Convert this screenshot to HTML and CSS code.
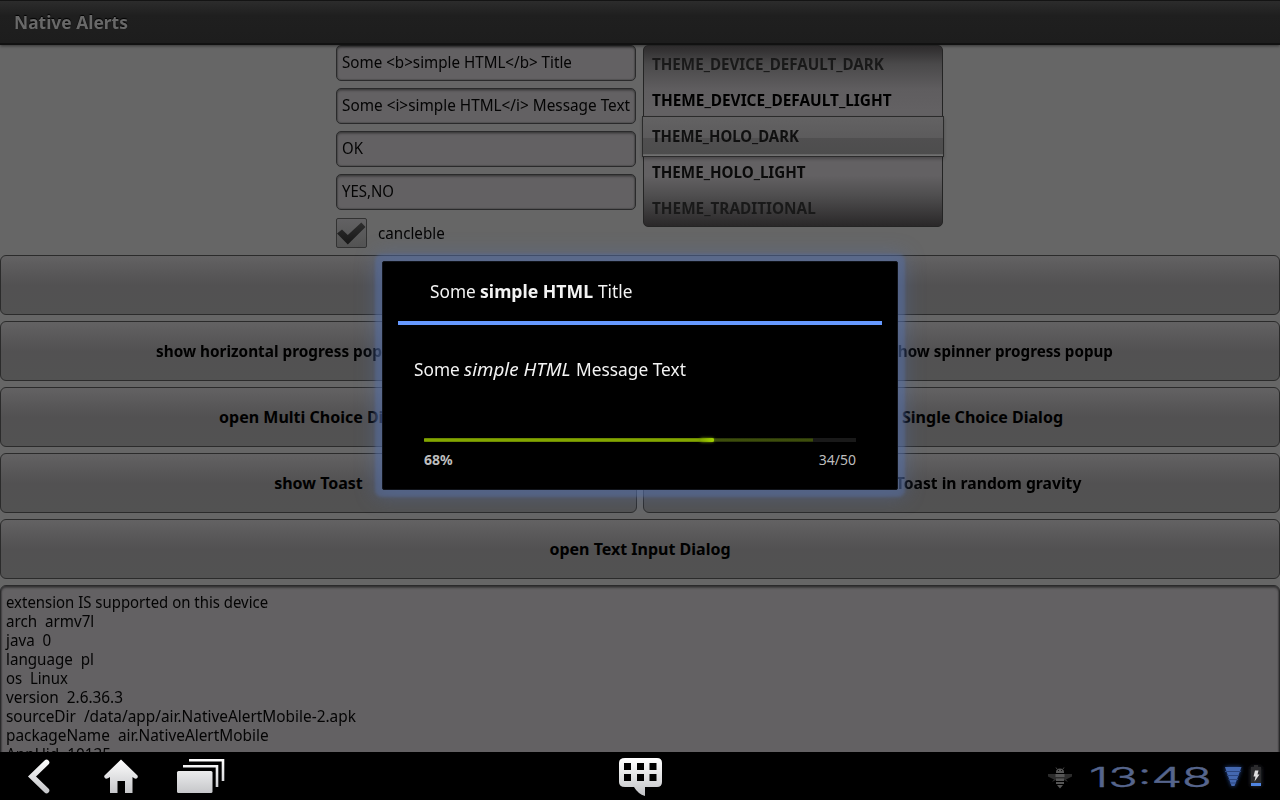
FILE: index.html
```html
<!DOCTYPE html>
<html lang="en">
<head>
<meta charset="utf-8">
<title>Native Alerts</title>
<link rel="stylesheet" href="styles.css">
</head>
<body>
<div class="screen">
  <header class="titlebar"><span class="t title">Native Alerts</span></header>
  <main class="app">
    <section class="form">
      <div class="fields">
        <div class="input"><span class="t k948">Some &lt;b&gt;simple HTML&lt;/b&gt; Title</span></div>
        <div class="input"><span class="t k958">Some &lt;i&gt;simple HTML&lt;/i&gt; Message Text</span></div>
        <div class="input"><span class="t k933">OK</span></div>
        <div class="input"><span class="t k933">YES,NO</span></div>
        <div class="check">
          <span class="box"><svg width="31" height="30" viewBox="0 0 31 30"><defs><linearGradient id="ck" x1="0" y1="0" x2="0" y2="1"><stop offset="0" stop-color="#2e2e2e"/><stop offset="1" stop-color="#171717"/></linearGradient></defs><path d="M1 15.500 6 11.500 11.800 17 25.300 4.500 29.500 9 11.800 26.500z" fill="url(#ck)"/></svg></span>
          <span class="t k948">cancleble</span>
        </div>
      </div>
      <div class="picker">
        <div class="item dim"><span class="t k948">THEME_DEVICE_DEFAULT_DARK</span></div>
        <div class="item"><span class="t k962">THEME_DEVICE_DEFAULT_LIGHT</span></div>
        <div class="item mid"><span class="t k933">THEME_HOLO_DARK</span></div>
        <div class="item low"><span class="t k948">THEME_HOLO_LIGHT</span></div>
        <div class="item dim"><span class="t k958">THEME_TRADITIONAL</span></div>
        <div class="selector"></div>
      </div>
    </section>
    <section class="buttons">
      <div class="row"><div class="btn"></div></div>
      <div class="row two">
        <div class="btn start"><span class="t k958">show horizontal progress popup</span></div>
        <div class="btn end e1"><span class="t k948">show spinner progress popup</span></div>
      </div>
      <div class="row two">
        <div class="btn"><span>open Multi Choice Dialog</span></div>
        <div class="btn end e2"><span>open Single Choice Dialog</span></div>
      </div>
      <div class="row two">
        <div class="btn"><span>show Toast</span></div>
        <div class="btn end e3"><span class="t k980">show Toast in random gravity</span></div>
      </div>
      <div class="row"><div class="btn">open Text Input Dialog</div></div>
    </section>
    <section class="log">
      <div><span class="t k933">extension IS supported on this device</span></div>
      <div><span class="t k948">arch  armv7l</span></div>
      <div><span class="t k948">java  0</span></div>
      <div><span class="t k948">language  pl</span></div>
      <div><span class="t k933">os  Linux</span></div>
      <div><span class="t k958">version  2.6.36.3</span></div>
      <div><span class="t k962">sourceDir  /data/app/air.NativeAlertMobile-2.apk</span></div>
      <div><span class="t k962">packageName  air.NativeAlertMobile</span></div>
      <div><span class="t k958">AppUid  10135</span></div>
    </section>
  </main>
  <footer class="sysbar">
    <svg class="nav" width="240" height="48" viewBox="0 0 240 48">
      <defs><linearGradient id="w" gradientUnits="userSpaceOnUse" x1="0" y1="7" x2="0" y2="42"><stop offset="0" stop-color="#fff"/><stop offset="1" stop-color="#c4c5c8"/></linearGradient></defs>
      <path d="M46.500 10.500 32 24.500 46.500 38.500" fill="none" stroke="url(#w)" stroke-width="5.600" stroke-linecap="round" stroke-linejoin="miter"/>
      <path d="M121 7.500 137.500 23.500Q138.500 25.500 136.500 26.500Q135 27.200 132.500 25V41H125V29H117.500V41H110V25Q107 27.200 105.500 26.500Q103.500 25 104.500 23.500Z" fill="url(#w)"/>
      <rect x="177" y="19" width="35.500" height="22" rx="1.500" fill="url(#w)"/>
      <path d="M183 14.300H217V35M189 8.300H223V29" fill="none" stroke="url(#w)" stroke-width="2.600"/>
    </svg>
    <svg class="ime" width="46" height="48" viewBox="0 0 46 48">
      <path fill="url(#w)" fill-rule="evenodd" d="M7 6H39Q44 6 44 11V30Q44 35 39 35H27V44Q20 42 16 35H7Q1 35 1 30V11Q1 6 7 6ZM6 11V18H13V11ZM19 11V18H26V11ZM31.500 11V18H38.500V11ZM6 22V29H13V22ZM19 22V29H26V22ZM31.500 22V29H38.500V22Z"/>
    </svg>
    <div class="status">
      <svg class="bee" width="24" height="22" viewBox="0 0 24 22">
        <path d="M0 7H8L12 9 16 7H24V9.500L19 12H18L20 15 15 12.500H9L4 15 6 12H5L0 9.500Z" fill="#2c2c2c"/>
        <path d="M8 5Q8 1.500 12 1.500T16 5V6H8ZM7.500 7H16.500V10H7.500ZM8 11.500H16V14H8ZM8 15H16V17H8ZM9 18H15L12 21.500Z" fill="#565656"/>
        <path d="M9 2 8 .5M15 2 16 .5" stroke="#454545"/>
        <path d="M10 3h1v1h-1zM13 3h1v1h-1z" fill="#111"/>
      </svg>
      <div class="clock"><span>13:48</span></div>
      <svg class="sig" width="46" height="34" viewBox="0 0 46 34">
        <defs><filter id="g" x="-50%" y="-50%" width="200%" height="200%"><feGaussianBlur stdDeviation="2"/></filter></defs>
        <path d="M5 7H21.500L14.500 26H11.500Z" fill="#274b96" filter="url(#g)"/>
        <path d="M5 7H21.500L14.500 26H11.500Z" fill="#4468b0"/>
        <path d="M5 11.500H21M7 15.500H19M8.500 19.500H18M10 23H16" stroke="#2b4680"/>
        <rect x="31" y="7" width="10" height="19" fill="#303440" filter="url(#g)"/>
        <path d="M34 5H38V7H41V26H31V7H34Z" fill="#2b2b2d"/>
        <rect x="31" y="23" width="10" height="3" fill="#4f84e0"/>
        <path d="M35 10.500H38.500L37.500 14.500H39.500L34.500 21.500 35.500 16.500H33.500Z" fill="#dedede"/>
      </svg>
    </div>
  </footer>
  <div class="dialog">
    <div class="dtitle"><span class="t k958">Some</span><b class="t b1">simple HTML</b><span class="t k958">Title</span></div>
    <div class="rule"></div>
    <div class="dmsg"><span class="t k958">Some</span><i class="t i1">simple HTML</i><span class="t k962">Message Text</span></div>
    <div class="bar"><div class="second"></div><div class="first"></div></div>
    <div class="nums"><b>68%</b><span>34/50</span></div>
  </div>
</div>
</body>
</html>
```
FILE: styles.css
```css
* { box-sizing: border-box; }
body { margin: 0; font: 16px/19px "Noto Sans", "Open Sans", sans-serif; color: #040404; }
.screen { position: relative; width: 1280px; height: 800px; overflow: hidden; background: #666; display: flex; flex-direction: column; }

/* Condensing helpers for text runs */
.t { display: inline-block; white-space: pre; transform-origin: 0 50%; }
.k933 { transform: scaleX(.933); }
.k948 { transform: scaleX(.948); }
.k958 { transform: scaleX(.958); }
.k962 { transform: scaleX(.962); }
.k980 { transform: scaleX(.98); }

.titlebar { flex: none; height: 45px; padding: 10px 14px; border-top: 1px solid #141414; border-bottom: 2px solid #111; background: linear-gradient(#2c2c2c, #1f1f1f 35%, #1d1d1d); box-shadow: 0 1px 3px rgba(0,0,0,.5); position: relative; }
.title { font-size: 18px; line-height: 22px; font-weight: 700; color: #696969; text-shadow: 0 -1px 1px #000; transform: scaleX(.967); }

.app { height: 707px; overflow: hidden; display: flex; flex-direction: column; gap: 6px; }
.form { height: 204px; display: flex; padding-left: 336px; gap: 7px; }
.fields { width: 300px; display: flex; flex-direction: column; gap: 7px; }
.input { height: 36px; flex: none; border: 1px solid #2a2a2b; border-radius: 5px; background: #636163; box-shadow: inset 0 2px 2px rgba(30,30,30,.35), inset 0 0 1px 1px #525152; padding: 7px 5px; white-space: nowrap; }
.check { display: flex; align-items: center; gap: 11px; height: 32px; }
.box { width: 31px; height: 30px; border: 1px solid #323232; border-radius: 2px; background: linear-gradient(#626163, #535353); }
.box svg { display: block; margin: -1px; }

.picker { position: relative; width: 300px; height: 182px; border: 1px solid #242424; border-radius: 5px; background: linear-gradient(#2d2b2c, #4a494a 10%, #5f5d5f 24%, #636163 36%, #636163 72%, #4f4e4f 83%, #2a2829); font-weight: 700; }
.item { height: 36px; padding: 9px 8px; position: relative; color: #000; }
.item.dim { color: #191919; }
.item.low { color: #0b0b0b; }
.item.mid { z-index: 1; color: #101010; }
.selector { position: absolute; left: -2px; right: -2px; top: 70px; height: 41px; border: 1px solid #2b2b2b; background: linear-gradient(#636263, #5c5b5c 53%, #504f50 54%, #4d4d4d 94%, #707070 97%); box-shadow: 0 2px 3px rgba(0,0,0,.25); }

.buttons { display: flex; flex-direction: column; gap: 6px; }
.row { height: 60px; display: grid; grid-template-columns: 1fr; gap: 6px; }
.two { grid-template-columns: 637px 637px; }
.btn { min-width: 0; display: flex; align-items: center; justify-content: center; border: 1px solid #2b2b2b; border-radius: 6px; background: linear-gradient(#636263, #5a595a 25%, #525152 50%, #525252); font-weight: 700; white-space: pre; color: #000; }
.start { justify-content: flex-start; padding-left: 155px; }
.end { justify-content: flex-end; }
.end .t { transform-origin: 100% 50%; }
.e1 { padding-right: 166px; }
.e2 { padding-right: 216px; }
.e3 { padding-right: 198px; }

.log { flex: none; height: 200px; border: 1px solid #2a2a2b; border-radius: 6px; background: #636163; box-shadow: inset 0 2px 2px rgba(30,30,30,.5), inset 0 0 1px 1px #4d4c4d; padding: 7px 5px; }
.log div { height: 19px; }

.sysbar { flex: none; height: 48px; background: #000; display: flex; }
.ime { margin-left: 378px; }
.status { width: 240px; display: flex; margin-left: auto; padding-left: 8px; }
.bee { margin-top: 15px; }
.clock { width: 121px; margin-left: 17px; color: #56658c; font: 300 27.5px/48px Inter, sans-serif; }
.clock span { display: inline-block; transform: translateY(1px) scaleX(1.77); transform-origin: 0 50%; -webkit-text-stroke: .4px #56658c; }
.sig { margin: 8px 0 0 10px; }

.dialog { position: absolute; left: 382px; top: 261px; width: 516px; height: 229px; background: #000; border: 1px solid #10131a; border-radius: 2px; color: #f3f3f3; font-size: 18px; line-height: 22px; padding: 18px 15px 0; box-shadow: 0 0 3px 7px rgba(85,112,170,.42), 0 0 20px 7px rgba(85,112,170,.4); }
.dtitle { height: 41px; padding-left: 32px; display: flex; }
.dtitle .t, .dmsg .t { flex: none; }
.dtitle .t:first-child, .dmsg .t:first-child { width: 50px; }
.b1 { width: 118px; transform: scaleX(.98); }
.rule { height: 4px; background: #6699ff; }
.dmsg { height: 112px; padding: 33px 0 0 16px; display: flex; }
.dmsg .i1 { width: 112px; transform: scaleX(1.045); }
.bar { height: 6px; margin: 0 26px; position: relative; background: linear-gradient(#000 1px, #191919 1px 5px, #000 5px); }
.second, .first { position: absolute; left: 0; top: 1px; height: 4px; }
.second { width: 90%; background: linear-gradient(#232d08, #3f500c 40%, #3f500c 60%, #232d08); }
.first { width: 290px; background: linear-gradient(#5d7600, #83a600 30% 70%, #5d7600); border-radius: 1px; }
.first::after { content: ""; position: absolute; right: 0; top: 0; width: 14px; height: 4px; border-radius: 2px; background: linear-gradient(90deg, transparent, #a4d400); box-shadow: 0 0 3px #6f9000; }
.nums { display: flex; justify-content: space-between; margin: 6px 26px 0; font-size: 14px; line-height: 22px; color: #bdbdbd; }
```
